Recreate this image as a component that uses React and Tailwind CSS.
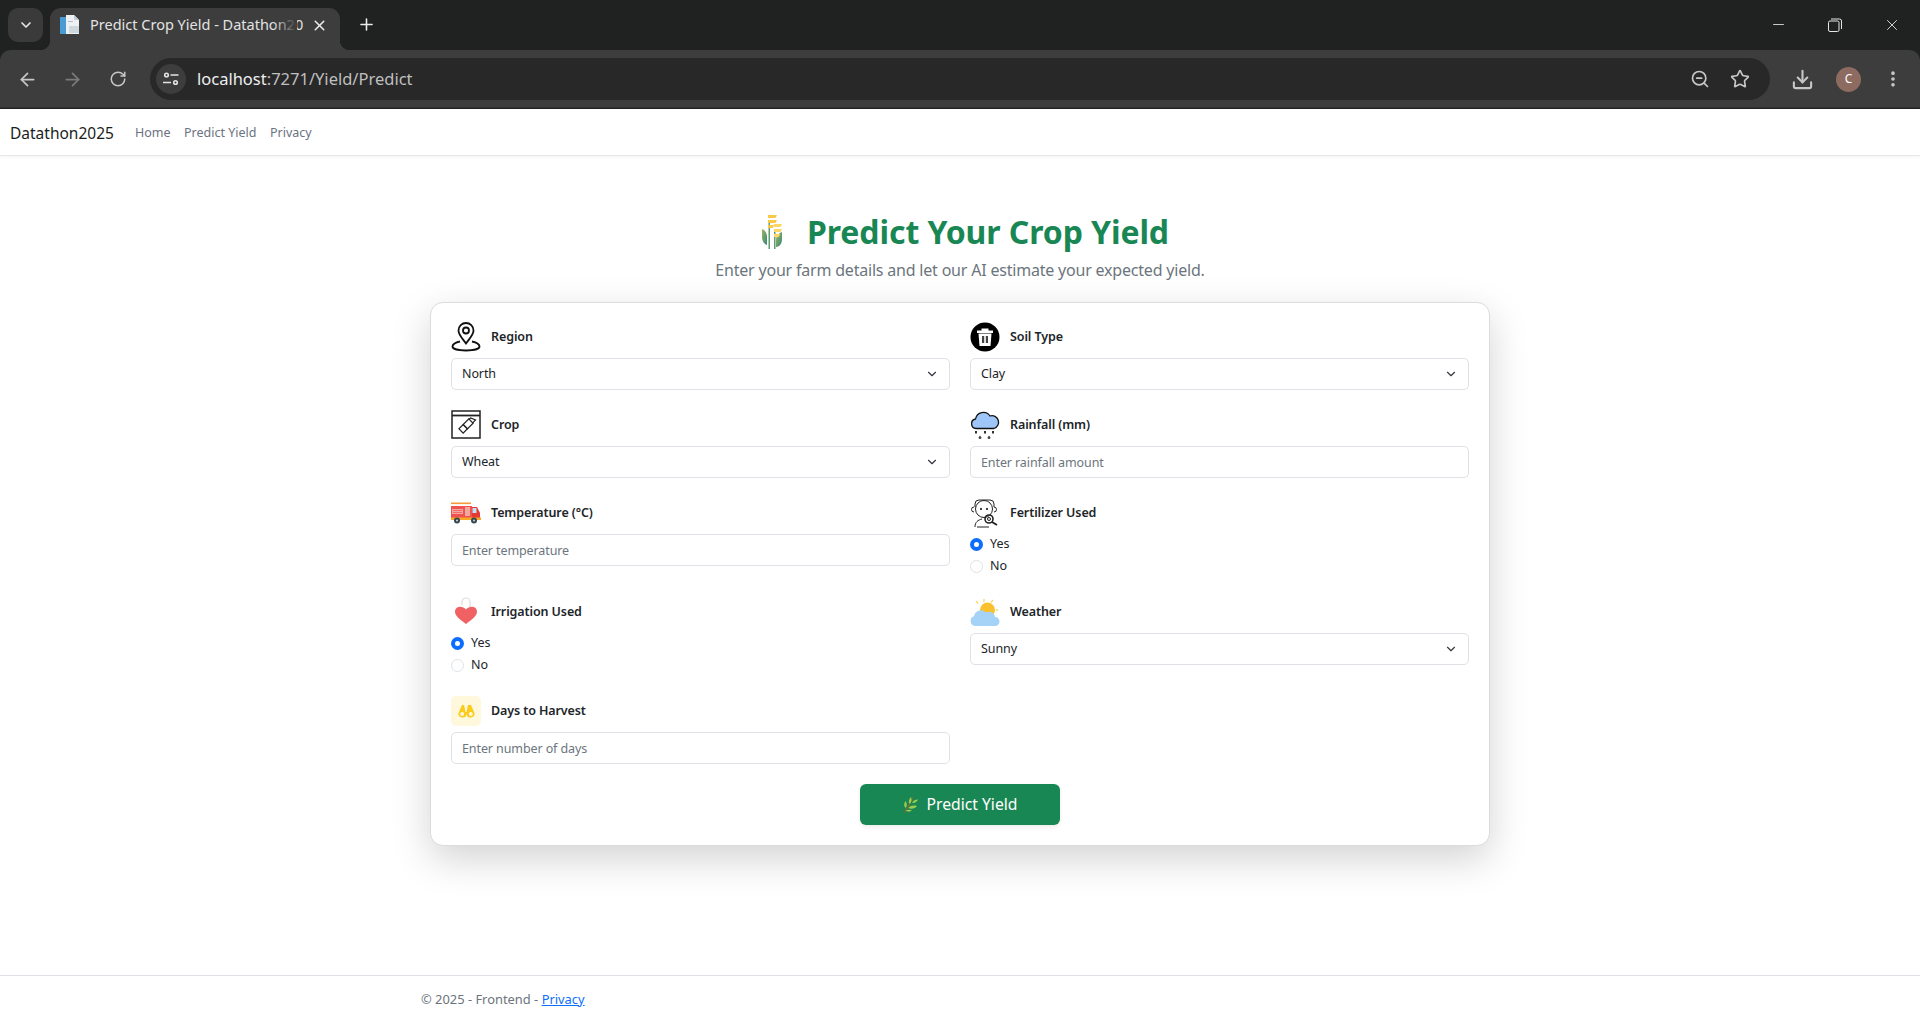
import { ChevronDown, X, Plus, ArrowLeft, ArrowRight, RotateCw, ZoomOut, Star, Download, EllipsisVertical, Minus } from 'lucide-react';

const chevron = <ChevronDown size={14} strokeWidth={2} className="absolute right-[11px] top-[9px] text-[#343a40] pointer-events-none" />;

function TabFavicon() {
  return (
    <svg width="20" height="20" viewBox="0 0 20 20">
      <rect x="0" y="2" width="6" height="17" fill="#4a9ad4" />
      <path d="M6 0h8l5 5v14H6z" fill="#eef1f4" />
      <path d="M14 0l5 5h-5z" fill="#c4ccd4" />
      <rect x="9" y="11" width="10" height="7" fill="#cfd8df" />
      <rect x="8" y="6" width="5" height="1" fill="#b0bac2" />
    </svg>
  );
}

function BrowserChrome() {
  return (
    <div className="bg-[#202221] h-[109px] flex flex-col">
      <div className="h-[50px] flex items-end pl-2 text-[#e6e6e6]">
        <div className="w-[35px] h-[34px] mb-2 rounded-[10px] bg-[#3a3a3a] flex items-center justify-center">
          <ChevronDown size={16} strokeWidth={2.5} />
        </div>
        <div className="relative ml-[7px] w-[290px] h-[42px] bg-[#3d3d3d] rounded-t-[11px] flex items-center pl-2.5 pb-[8px]">
          <TabFavicon />
          <div className="relative ml-[10px] w-[207px] whitespace-nowrap text-[14.5px] text-[#e3e3e3]">
            Predict Crop Yield - Datathon20
            <div className="absolute right-0 top-0 bottom-0 w-6 bg-gradient-to-r from-transparent to-[#3d3d3d]" />
          </div>
          <X size={17} strokeWidth={2.2} className="ml-[14px] text-[#eaeaea]" />
          <div className="absolute -right-[10px] bottom-0 w-[10px] h-[10px] bg-[radial-gradient(circle_at_100%_0,transparent_10px,#3d3d3d_10.5px)]" />
          <div className="absolute -left-[10px] bottom-0 w-[10px] h-[10px] bg-[radial-gradient(circle_at_0_0,transparent_10px,#3d3d3d_10.5px)]" />
        </div>
        <Plus size={19} strokeWidth={2} className="ml-[17px] mb-[16px] text-[#ececec]" />
        <div className="ml-auto flex items-center h-[50px] self-start">
          <Minus size={17} strokeWidth={1.2} className="mr-[41px] -mt-[2px]" />
          <svg width="14" height="14" viewBox="0 0 14 14" fill="none" stroke="#e6e6e6" strokeWidth="1" className="mr-[41px]">
            <rect x="0.5" y="3" width="10.5" height="10.5" rx="1.5" />
            <path d="M3 1h8.5a2 2 0 0 1 2 2v8" />
          </svg>
          <X size={18} strokeWidth={1.2} className="mr-[19px]" />
        </div>
      </div>
      <div className="h-[58px] bg-[#3d3d3d] rounded-t-[11px] flex items-center text-[#c7c7c7] relative">
        <ArrowLeft size={21} strokeWidth={2} className="ml-[17px]" />
        <ArrowRight size={21} strokeWidth={2} className="ml-[24px] text-[#7b7b7b]" />
        <RotateCw size={18} strokeWidth={2} className="ml-[26px]" />
        <div className="ml-[23px] w-[1620px] h-[42px] rounded-full bg-[#282828] flex items-center pl-[6px]">
          <div className="w-[30px] h-[30px] rounded-full bg-[#3d3d3d] flex items-center justify-center">
            <svg width="16" height="14" viewBox="0 0 16 14" fill="none" stroke="#e3e3e3" strokeWidth="1.6">
              <circle cx="3.5" cy="3" r="1.8" />
              <path d="M7.5 3h8M0 10.500h8" />
              <circle cx="12.500" cy="10.500" r="1.8" />
            </svg>
          </div>
          <span className="ml-[11px] text-[16.5px] text-[#bfbfbf]"><span className="text-[#eeeeee]">localhost</span>:7271/Yield/Predict</span>
          <ZoomOut size={20} strokeWidth={2} className="ml-auto text-[#c7c7c7]" />
          <Star size={20} strokeWidth={2} className="ml-[20px] mr-[20px] text-[#c7c7c7]" />
        </div>
        <Download size={23} strokeWidth={2.2} className="ml-[21px]" />
        <div className="ml-[22px] w-[25px] h-[25px] rounded-full bg-[#8d6b60] flex items-center justify-center text-[12px] text-white">C</div>
        <EllipsisVertical size={20} strokeWidth={2.4} className="ml-[22px]" />
        <div className="absolute left-0 right-0 bottom-0 h-px bg-[#333333]" />
      </div>
    </div>
  );
}

function WheatLogo() {
  return (
    <svg width="20" height="34" viewBox="0 0 20 34">
      <defs>
        <linearGradient id="wl" x1="0" y1="0" x2="1" y2="1">
          <stop offset="0" stopColor="#a5b45c" />
          <stop offset="1" stopColor="#2f8a7a" />
        </linearGradient>
      </defs>
      <path d="M0 14c3 1 5 4 5 8v8c-3-1-5-4-5-8z" fill="url(#wl)" />
      <path d="M20 17c-3 1-6 4-6 8v7c4 0 6-4 6-8z" fill="url(#wl)" />
      <rect x="6.500" y="8" width="1.500" height="26" fill="#5f9a75" />
      <rect x="12" y="14" width="1.500" height="20" fill="#5f9a75" />
      <path d="M6 0h9l-1.500 3H6zM6 5h9l-1.500 3H6zM6 10h6l-1 3H6z" fill="#fbc94a" />
      <path d="M12 9h8l-1.500 3H12zM12 14h8l-1.500 3H12zM12 19h6l-1 3h-5z" fill="#fdd667" />
    </svg>
  );
}

const icons = {
  pin: (
    <svg width="30" height="30" viewBox="0 0 30 30" fill="none" stroke="#111" strokeWidth="1.800">
      <path d="M15 21.500c-3-4.500-7.500-8.500-7.500-13a7.500 7.500 0 0 1 15 0c0 4.500-4.500 8.500-7.500 13z" />
      <circle cx="15" cy="8.500" r="3" />
      <path d="M9 19.500C4.500 20.500 1.500 22 1.500 24.500 1.500 27 8 28.500 15 28.500S28.500 27 28.500 24.500c0-2.500-3-4-7.500-5" />
    </svg>
  ),
  crop: (
    <svg width="30" height="30" viewBox="0 0 30 30" fill="none" stroke="#222" strokeWidth="1.200">
      <rect x="1" y="1" width="28" height="27" strokeWidth="1.500" />
      <path d="M1 5.500h28" strokeWidth="1.800" />
      <g transform="rotate(45 15 16)">
        <rect x="12" y="9" width="6" height="8" />
        <rect x="12" y="17" width="6" height="6" />
        <path d="M12.500 9V7l5-2v4" />
      </g>
    </svg>
  ),
  truck: (
    <svg width="30" height="22" viewBox="0 0 30 22">
      <rect x="0" y="0.500" width="20" height="1.600" fill="#f59a3c" />
      <rect x="0" y="4" width="21" height="12" fill="#ef5350" />
      <rect x="1" y="7" width="11" height="5" fill="#f4a6a0" />
      <path d="M2 8.500h9M2 10.500h9" stroke="#ef5350" strokeWidth="0.700" />
      <rect x="14" y="5" width="5" height="9" fill="#f4a6a0" />
      <path d="M21 5h5l3 6v6h-8z" fill="#e53935" />
      <rect x="21.500" y="6" width="4" height="5" fill="#bfe3f5" />
      <rect x="0" y="15.500" width="30" height="2.500" fill="#f9a825" />
      <circle cx="6" cy="18.500" r="3" fill="#37474f" />
      <circle cx="23" cy="18.500" r="3" fill="#37474f" />
      <circle cx="6" cy="18.500" r="1" fill="#cfd8dc" />
      <circle cx="23" cy="18.500" r="1" fill="#cfd8dc" />
    </svg>
  ),
  heart: (
    <svg width="30" height="30" viewBox="0 0 30 30">
      <path d="M11 8V5a4 4 0 0 1 8 0v5" fill="none" stroke="#dddddd" strokeWidth="1.200" />
      <path d="M15 27C9 22.500 4 19 4 14.500c0-5.500 7.500-6.500 11-2 3.500-4.500 11-3.500 11 2C26 19 21 22.500 15 27z" fill="#ef6163" />
    </svg>
  ),
  binoculars: (
    <div className="w-[30px] h-[30px] rounded-[5px] bg-[#fff8dc] flex items-center justify-center">
      <svg width="17" height="13" viewBox="0 0 17 13">
        <path d="M4 0h2l1.500 7H8.500L10 0h3l3.500 8a4 4 0 1 1-8 1H8.500a4 4 0 1 1-8-1z" fill="#fbcb1c" />
        <circle cx="4.200" cy="9" r="2" fill="#fff8dc" />
        <circle cx="12.800" cy="9" r="2" fill="#fff8dc" />
      </svg>
    </div>
  ),
  soil: (
    <svg width="30" height="30" viewBox="0 0 30 30">
      <circle cx="15" cy="15" r="14.500" fill="#000" />
      <path d="M7 8.500h16v2.500H7zM11.500 6.500h7v2h-7z" fill="#fff" />
      <path d="M8.500 11.500h13L20.500 24h-11z" fill="#fff" />
      <rect x="12" y="14" width="2.200" height="7" fill="#444" />
      <rect x="15.800" y="14" width="2.200" height="7" fill="#444" />
    </svg>
  ),
  rain: (
    <svg width="30" height="30" viewBox="0 0 30 30">
      <path d="M6 18.500a4.800 4.800 0 0 1-.5-9.500A8 8 0 0 1 20 6a6.500 6.500 0 0 1 4 12.500z" fill="#9fc6f9" stroke="#111" strokeWidth="1.300" />
      <path d="M6 21v2.500M15 21v2.500M23 21v2.500" stroke="#333" strokeWidth="2" />
      <path d="M10 25.500l1.500 2a1.500 1.500 0 1 1-3 0zM19 25.500l1.500 2a1.500 1.500 0 1 1-3 0z" fill="#444" />
    </svg>
  ),
  farmer: (
    <svg width="30" height="30" viewBox="0 0 30 30" fill="none" stroke="#222" strokeWidth="1">
      <path d="M5 9V6a4 4 0 0 1 4-4h11a4 4 0 0 1 4 4v3" />
      <circle cx="14" cy="11" r="8.500" />
      <path d="M4 9a2 2 0 0 0 0 5M24 9a2 2 0 0 1 0 5" />
      <path d="M5 29c0-5 3-7 7-8M7 29h12" />
      <circle cx="11" cy="11" r="0.700" fill="#222" />
      <circle cx="17" cy="11" r="0.700" fill="#222" />
      <circle cx="19" cy="21" r="4" strokeWidth="1.600" />
      <circle cx="19" cy="21" r="1.500" />
      <path d="M22 24l5 3" strokeWidth="2" />
    </svg>
  ),
  weather: (
    <svg width="30" height="30" viewBox="0 0 30 30">
      <path d="M14 2v3M6 4l2 2.500M23 3l-2 2.500M28 13h-2" stroke="#fbd85c" strokeWidth="1.300" />
      <circle cx="17.500" cy="13" r="7.500" fill="#fbc02d" />
      <path d="M5 29a5 5 0 0 1-1-9.700A7 7 0 0 1 16 15.500a6 6 0 0 1 9 4.500 4.500 4.500 0 0 1 0 9z" fill="#a4d3f7" />
    </svg>
  ),
};

function SproutIcon() {
  return (
    <svg width="15" height="17" viewBox="0 0 15 17">
      <path d="M1.500 16.500C4 13 8 7 9.500 1" fill="none" stroke="#7c6a2c" strokeWidth="1.300" />
      <path d="M2.500 12C0.500 10 1 7 2.500 5c1.500 2.500 2 5 0 7zM6.500 8C5 6 6 3 8 1c1 2.500 0.500 5.500-1.500 7zM5.500 12c2-2.500 5.500-3 8.500-2-2 2.500-5.500 3.500-8.500 2zM9 7c1-2.500 3.500-3.500 6-3.500-1 2.500-3.500 4-6 3.500zM2.500 14.500c2-1 4.500-1 6.500 0-2 1.500-4.500 1.500-6.500 0z" fill="#9ccc4f" />
    </svg>
  );
}

function FieldLabel({ icon, children }) {
  return (
    <div className="h-[30px] flex items-center gap-[10px] mb-[6px]">
      <div className="w-[30px] h-[30px] flex items-center justify-center shrink-0">{icons[icon]}</div>
      <label className="text-[12.500px] tracking-[-0.1px] font-semibold text-[#212529]">{children}</label>
    </div>
  );
}

function SelectField({ icon, label, value, options }) {
  return (
    <div>
      <FieldLabel icon={icon}>{label}</FieldLabel>
      <div className="relative">
        <select defaultValue={value} className="appearance-none w-full h-[32px] pl-[10px] pr-8 bg-white border border-[#dee2e6] rounded-[5px] text-[12.500px] tracking-[-0.1px] text-[#212529] outline-none">
          {options.map((o) => <option key={o}>{o}</option>)}
        </select>
        {chevron}
      </div>
    </div>
  );
}

function InputField({ icon, label, placeholder }) {
  return (
    <div>
      <FieldLabel icon={icon}>{label}</FieldLabel>
      <input type="text" placeholder={placeholder} className="w-full h-[32px] px-[10px] bg-white border border-[#dee2e6] rounded-[5px] text-[12.500px] tracking-[-0.1px] text-[#212529] placeholder:text-[#6c757d] outline-none" />
    </div>
  );
}

function RadioField({ icon, label, name }) {
  return (
    <div>
      <FieldLabel icon={icon}>{label}</FieldLabel>
      <div className="-mt-[1px]">
        {['Yes', 'No'].map((o) => (
          <label key={o} className="h-[22px] flex items-center gap-[7px] text-[12.500px] text-[#212529]">
            <input type="radio" name={name} defaultChecked={o === 'Yes'} className="appearance-none w-[13px] h-[13px] rounded-full bg-white border border-[#dee2e6] checked:border-[4px] checked:border-[#0d6efd]" />
            {o}
          </label>
        ))}
      </div>
    </div>
  );
}

export default function App() {
  return (
    <div className="h-[1020px] flex flex-col bg-white font-['Noto_Sans',sans-serif] overflow-hidden">
      <BrowserChrome />

      <nav className="h-[47px] shrink-0 border-b border-[#e5e7ea] shadow-[0_1px_3px_rgba(0,0,0,0.05)] flex items-center pl-[10px] pt-[3px]">
        <span className="text-[15.500px] text-[#1a1d20] mr-[21px]">Datathon2025</span>
        <div className="flex gap-[13.500px] text-[12.500px] text-[#6b7280]">
          <a>Home</a>
          <a>Predict Yield</a>
          <a>Privacy</a>
        </div>
      </nav>

      <main className="flex-1 flex flex-col items-center pt-[56px]">
        <h1 className="flex items-center gap-[25px] h-[40px] text-[32px] tracking-[-0.1px] font-bold text-[#198754]">
          <div className="w-[31px] flex justify-end"><WheatLogo /></div>
          Predict Your Crop Yield
        </h1>
        <p className="mt-[5px] text-[16px] tracking-[-0.2px] leading-[26px] text-[#6c757d]">Enter your farm details and let our AI estimate your expected yield.</p>

        <form className="mt-[19px] w-[1060px] h-[544px] bg-white border border-[#dcdcdc] rounded-[13px] shadow-[0_13px_38px_rgba(0,0,0,0.175)] px-[20px] pt-[19px]">
          <div className="grid grid-cols-2 gap-x-[20px] gap-y-[20px]">
            <SelectField icon="pin" label="Region" value="North" options={['North', 'South', 'East', 'West']} />
            <SelectField icon="soil" label="Soil Type" value="Clay" options={['Clay', 'Sandy', 'Loam']} />
            <SelectField icon="crop" label="Crop" value="Wheat" options={['Wheat', 'Rice', 'Maize']} />
            <InputField icon="rain" label="Rainfall (mm)" placeholder="Enter rainfall amount" />
            <InputField icon="truck" label="Temperature (°C)" placeholder="Enter temperature" />
            <RadioField icon="farmer" label="Fertilizer Used" name="fertilizer" />
            <RadioField icon="heart" label="Irrigation Used" name="irrigation" />
            <SelectField icon="weather" label="Weather" value="Sunny" options={['Sunny', 'Rainy', 'Cloudy']} />
            <InputField icon="binoculars" label="Days to Harvest" placeholder="Enter number of days" />
          </div>
          <div className="flex justify-center mt-[20px]">
            <button type="button" className="w-[200px] h-[41px] rounded-[6px] bg-[#198754] text-white text-[15.700px] flex items-center justify-center gap-[9px] shadow-[0_2px_4px_rgba(0,0,0,0.08)]">
              <SproutIcon />
              Predict Yield
            </button>
          </div>
        </form>
      </main>

      <footer className="h-[45px] shrink-0 border-t border-[#dee2e6] pl-[421px] pt-[14px] text-[12.900px] text-[#6c757d]">
        © 2025 - Frontend - <a className="text-[#0d6efd] underline">Privacy</a>
      </footer>
    </div>
  );
}
